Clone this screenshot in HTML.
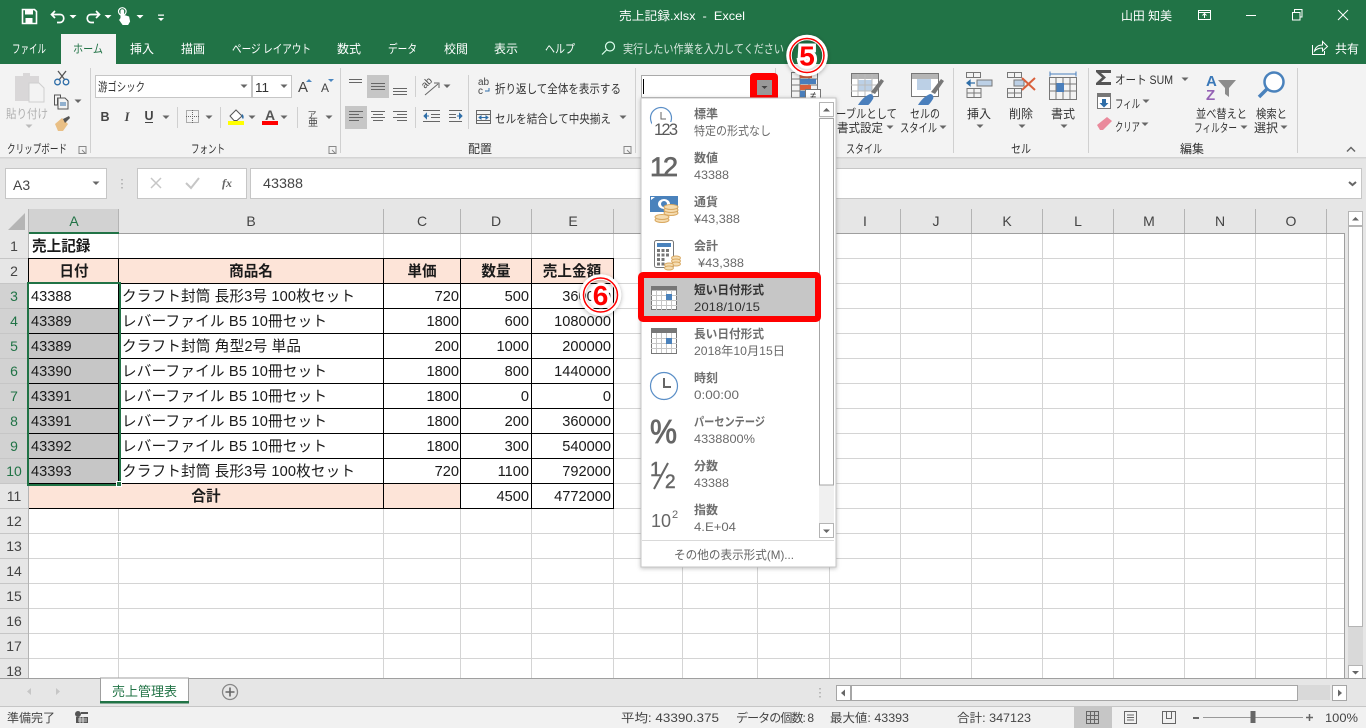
<!DOCTYPE html>
<html lang="ja">
<head>
<meta charset="utf-8">
<title>売上記録.xlsx - Excel</title>
<style>
html,body{margin:0;padding:0;width:1366px;height:728px;overflow:hidden;background:#fff}
svg{display:block}
text{font-family:"Liberation Sans","Noto Sans CJK JP",sans-serif;white-space:pre}
.c{font-size:14.6px;fill:#1a1a1a}
.b{font-weight:bold}
.m{text-anchor:middle}
.e{text-anchor:end}
.u{font-size:12px;fill:#333}
.w{font-size:12px;fill:#fff}
.h{font-size:14px;fill:#444;text-anchor:middle}
.g{fill:#217346}
.l{font-size:12px;fill:#6e6e6e;font-weight:bold}
.s{font-size:12px;fill:#6a6a6a}
.n{font-weight:bold;font-size:28px;fill:#f00;text-anchor:middle;stroke:#fff;stroke-width:6px;paint-order:stroke}
.st{font-size:12px;fill:#444}
</style>
</head>
<body>
<svg width="1366" height="728" viewBox="0 0 1366 728" xmlns="http://www.w3.org/2000/svg">
<defs>
<path id="dd" d="M-3.5-1.5h7L0 2z" fill="#666"/>
<filter id="sh" x="-30%" y="-30%" width="160%" height="160%"><feDropShadow dx="0" dy="1" stdDeviation="2" flood-color="#000" flood-opacity=".3"/></filter>
<filter id="sm" x="-10%" y="-10%" width="120%" height="120%"><feDropShadow dx="0" dy="1" stdDeviation="2" flood-color="#000" flood-opacity=".25"/></filter>
</defs>

<!-- base -->
<rect width="1366" height="728" fill="#e6e6e6"/>
<rect width="1366" height="64" fill="#217346"/>
<rect y="64" width="1366" height="93" fill="#f3f3f3"/>
<rect y="157" width="1366" height="1.5" fill="#d4d4d4"/>

<!-- QAT -->
<g fill="none" stroke="#fff">
<path d="M22.5 9.5h12l2 2v12h-14z" stroke-width="1.6"/>
<rect x="25" y="10" width="8" height="4.5" fill="#fff" stroke="none"/>
<rect x="25.5" y="18" width="7" height="5" fill="#fff" stroke="none"/>
<path d="M55 11l-3.500 3.500L55 18M52 14.500h8c5 0 5 7.500 0 8h-3" stroke-width="1.700"/>
<path d="M96 11l3.500 3.500L96 18M99 14.500h-8c-5 0-5 7.500 0 8h3" stroke-width="1.700"/>
</g>
<path d="M120.500 18v-7a1.800 1.800 0 013.600 0v4l5 1.500 1 5-2 3.500h-5.500l-3.500-5z" fill="#fff"/>
<circle cx="122.300" cy="11.500" r="3.800" fill="none" stroke="#fff" stroke-width="1.200"/>
<path d="M69.500 15h7L73 18.500zM104.500 15h7l-3.500 3.500zM136.500 15h7l-3.500 3.500zM158 18h6l-3 3zM158 14.500h6v1.200h-6z" fill="#fff"/>

<!-- title -->
<text x="619" y="20" class="w" textLength="126" lengthAdjust="spacingAndGlyphs">売上記録.xlsx  -  Excel</text>
<text x="1121" y="20" class="w" textLength="51" lengthAdjust="spacingAndGlyphs">山田 知美</text>
<g fill="none" stroke="#fff" stroke-width="1">
<rect x="1198.500" y="10.500" width="12" height="9"/><path d="M1198.500 12.500h12M1204.500 18v-4M1202.500 15.500l2-2 2 2"/>
<path d="M1246 15.500h10"/>
<path d="M1292.500 12.500h7.500v7.500h-7.500zM1294.500 12v-2.500h7.500v7.500h-2"/>
<path d="M1338 10l10 10M1348 10l-10 10"/>
</g>

<!-- tabs -->
<rect x="61" y="34" width="55" height="30" fill="#f3f3f3"/>
<text x="12" y="53" class="w" textLength="34" lengthAdjust="spacingAndGlyphs">ファイル</text>
<text x="73" y="53" class="u g" textLength="30" lengthAdjust="spacingAndGlyphs">ホーム</text>
<text x="130" y="53" class="w" textLength="24" lengthAdjust="spacingAndGlyphs">挿入</text>
<text x="181" y="53" class="w" textLength="24" lengthAdjust="spacingAndGlyphs">描画</text>
<text x="232" y="53" class="w" textLength="79" lengthAdjust="spacingAndGlyphs">ページ レイアウト</text>
<text x="337" y="53" class="w" textLength="24" lengthAdjust="spacingAndGlyphs">数式</text>
<text x="388" y="53" class="w" textLength="29" lengthAdjust="spacingAndGlyphs">データ</text>
<text x="444" y="53" class="w" textLength="24" lengthAdjust="spacingAndGlyphs">校閲</text>
<text x="494" y="53" class="w" textLength="24" lengthAdjust="spacingAndGlyphs">表示</text>
<text x="545" y="53" class="w" textLength="30" lengthAdjust="spacingAndGlyphs">ヘルプ</text>
<g fill="none" stroke="#dfe" stroke-width="1.200"><circle cx="610" cy="46.500" r="4.500"/><path d="M606.500 50l-4.500 4.500"/></g>
<text x="623" y="53" class="w" style="fill:#d7e6dd" textLength="161" lengthAdjust="spacingAndGlyphs">実行したい作業を入力してください</text>
<g fill="none" stroke="#fff" stroke-width="1"><path d="M1312.500 45v9.500h12V51M1314.500 51c1-4 4-6 8-6v-3.500l5 5-5 4.500v-3c-3 0-6 1-8 3z"/></g>
<text x="1335" y="53" class="w" textLength="24" lengthAdjust="spacingAndGlyphs">共有</text>

<!-- ribbon separators -->
<g fill="#d0d0d0">
<rect x="90" y="68" width="1" height="85"/><rect x="340" y="68" width="1" height="85"/><rect x="635" y="68" width="1" height="85"/><rect x="775" y="68" width="1" height="85"/><rect x="953" y="68" width="1" height="85"/><rect x="1088" y="68" width="1" height="85"/><rect x="1297" y="68" width="1" height="85"/>
<rect x="177" y="107" width="1" height="21"/><rect x="220" y="107" width="1" height="21"/><rect x="297" y="107" width="1" height="21"/>
<rect x="415" y="76" width="1" height="21"/><rect x="415" y="107" width="1" height="21"/><rect x="468" y="75" width="1" height="54"/>
</g>

<!-- clipboard -->
<path d="M15 76h8v-3h7v3h9v25H15z" fill="#d9d7d8"/>
<path d="M29 83h10l5 5v14H29z" fill="#f3f3f3" stroke="#cfcfcf"/>
<text x="6" y="118" class="u" style="fill:#b0b0b0" textLength="42" lengthAdjust="spacingAndGlyphs">貼り付け</text>
<use href="#dd" x="29" y="126" opacity=".4"/>
<g fill="none" stroke="#555" stroke-width="1.300">
<path d="M58 71l7 9M66 71l-7 9" />
<circle cx="57.500" cy="82" r="2.800" stroke="#2f6ea8"/><circle cx="66" cy="82" r="2.800" stroke="#2f6ea8"/>
<path d="M54.500 95h6v3h-3v7h-3zM60 98h5l3 3v8h-10v-11" stroke-width="1"/>
<path d="M60 103h6M60 105h6" stroke="#2f6ea8" stroke-width="1"/>
</g>
<use href="#dd" x="78" y="101"/>
<path d="M55 124l7-6 6 6-5 7h-5z" fill="#e9bf85"/><path d="M63 119l6-3 1 2-5 5z" fill="#555"/>

<!-- font -->
<rect x="95.500" y="75.500" width="156" height="22" fill="#fff" stroke="#c6c6c6"/>
<rect x="252.500" y="75.500" width="39" height="22" fill="#fff" stroke="#c6c6c6"/>
<text x="98" y="91" class="u" textLength="47" lengthAdjust="spacingAndGlyphs">游ゴシック</text>
<text x="255" y="92" class="u" style="font-size:13px" textLength="14" lengthAdjust="spacingAndGlyphs">11</text>
<use href="#dd" x="244" y="86"/><use href="#dd" x="284" y="86"/>
<text x="298" y="92" class="u" style="font-size:15px;fill:#444">A</text>
<path d="M306 82l3-3 3 3z" fill="#4a86c0"/>
<text x="321" y="92" class="u" style="font-size:12px;fill:#444">A</text>
<path d="M328 79h6l-3 3z" fill="#4a86c0"/>
<text x="105" y="121" class="u b m" style="font-size:12.500px;fill:#444">B</text>
<text x="127" y="121" class="u m" style="font-size:12.500px;font-style:italic;font-family:'Liberation Serif',serif;font-weight:bold;fill:#444">I</text>
<text x="149" y="120" class="u b m" style="font-size:12.500px;fill:#444">U</text>
<rect x="145" y="122" width="8" height="1" fill="#444"/>
<use href="#dd" x="166" y="117"/>
<g fill="none" stroke="#666" stroke-width="1" stroke-dasharray="1 1"><rect x="186.500" y="110.500" width="12" height="12"/><path d="M192.500 110v13M186 116.500h13"/></g>
<use href="#dd" x="209" y="117"/>
<path d="M230 116l6-6 6 6-5 4.500h-3z" fill="#fff" stroke="#555"/><path d="M242 114c2 1 2 4 1 5-1-1-2-3-1-5z" fill="#2f6ea8"/>
<rect x="228" y="121" width="16" height="4" fill="#ff0"/>
<use href="#dd" x="252" y="117"/>
<text x="270" y="120" class="u b m" style="font-size:14px;fill:#555">A</text>
<rect x="262" y="121" width="16" height="4" fill="#f00"/>
<use href="#dd" x="284" y="117"/>
<text x="312" y="118" class="u m" style="font-size:9px;fill:#444">ア</text>
<text x="313" y="126" class="u m" style="font-size:10px;fill:#444">亜</text>
<use href="#dd" x="329" y="117"/>
<text x="7" y="153" class="u" textLength="60" lengthAdjust="spacingAndGlyphs">クリップボード</text>
<text x="191" y="153" class="u" textLength="34" lengthAdjust="spacingAndGlyphs">フォント</text>
<g fill="none" stroke="#888" stroke-width="1"><path d="M79 146.500h7v7h-7zM82 150l3 3"/><path d="M329 146.500h7v7h-7zM332 150l3 3"/><path d="M624 146.500h7v7h-7zM627 150l3 3"/></g>

<!-- alignment -->
<rect x="367" y="75" width="22" height="23" fill="#c6c6c6"/>
<rect x="345" y="106" width="22" height="23" fill="#c6c6c6"/>
<g stroke="#666" stroke-width="1" fill="none">
<path d="M349 79.500h13M349 82.500h13"/>
<path d="M371 83.500h14M371 86.500h14M371 89.500h14"/>
<path d="M393 88.500h14M393 91.500h14M393 94.500h14"/>
<path d="M349 111.500h14M349 114.500h10M349 117.500h14M349 120.500h10"/>
<path d="M371 111.500h14M373 114.500h10M371 117.500h14M373 120.500h10"/>
<path d="M393 111.500h14M397 114.500h10M393 117.500h14M397 120.500h10"/>
<path d="M423 110.500h17M431 114.500h9M431 117.500h9M423 121.500h17"/>
<path d="M449 110.500h13M449 114.500h7M449 117.500h7M449 121.500h13"/>
<path d="M425 95l13-11M434 83l5 0v5"/>
</g>
<text x="0" y="0" transform="translate(425 89) rotate(-45)" class="u" style="font-size:10px;fill:#444">ab</text>
<path d="M429 116l-5 0M424 116l2.500-2.500v5z" fill="#2f6ea8" stroke="#2f6ea8"/>
<path d="M457 116h5M462 116l-2.500-2.500v5z" fill="#2f6ea8" stroke="#2f6ea8"/>
<use href="#dd" x="447" y="86"/>
<text x="478" y="85" class="u" style="font-size:10px;fill:#444">ab</text>
<text x="478" y="94" class="u" style="font-size:10px;fill:#444">c</text>
<path d="M485 91h4v-3" fill="none" stroke="#2f6ea8"/>
<text x="495" y="93" class="u" textLength="126" lengthAdjust="spacingAndGlyphs">折り返して全体を表示する</text>
<g fill="none" stroke="#666"><rect x="476.500" y="110.500" width="14" height="13"/><path d="M476.500 114.500h14M476.500 120.500h14"/></g>
<path d="M479 117.500h9M479 117.500l2-1.500v3zM488 117.500l-2-1.500v3z" stroke="#2f6ea8" fill="#2f6ea8"/>
<text x="495" y="123" class="u" textLength="116" lengthAdjust="spacingAndGlyphs">セルを結合して中央揃え</text>
<use href="#dd" x="623" y="117"/>
<text x="468" y="153" class="u" textLength="24" lengthAdjust="spacingAndGlyphs">配置</text>

<!-- conditional formatting icon -->
<g fill="none" stroke="#777"><rect x="791.500" y="72.500" width="26" height="25" /><path d="M791 79h27M791 85h27M791 91h27M800 72v26M809 72v26"/></g>
<rect x="800" y="73" width="12" height="5" fill="#d9603b"/><rect x="800" y="79" width="16" height="5" fill="#4a7fbc"/><rect x="800" y="85" width="11" height="5" fill="#d9603b"/><rect x="800" y="91" width="7" height="6" fill="#4a7fbc"/>
<rect x="805.500" y="89.500" width="15" height="11" fill="#fff" stroke="#777"/>
<text x="813" y="99" class="u m" style="font-size:11px">≠</text>

<!-- table format icon -->
<rect x="851.500" y="73.500" width="27" height="23" fill="#fff" stroke="#777"/>
<rect x="852" y="74" width="26" height="5" fill="#b5b5b5"/>
<rect x="858" y="80" width="14" height="11" fill="#bcd0e6"/>
<g stroke="#bbb" fill="none"><path d="M851 85h27M851 91h27M858 74v22M865 74v22M872 74v22"/></g>
<path d="M871 92l10-13 3 2-9 13z" fill="#777"/>
<path d="M858 105c3-5 7-9 12-11 3 0 4 3 3 5-2 3-4 6-5 6z" fill="#4a7fbc"/>
<text x="836" y="118" class="u" textLength="61" lengthAdjust="spacingAndGlyphs">ーブルとして</text>
<text x="837" y="132" class="u" textLength="46" lengthAdjust="spacingAndGlyphs">書式設定</text>
<use href="#dd" x="890" y="127"/>
<text x="846" y="153" class="u" textLength="36" lengthAdjust="spacingAndGlyphs">スタイル</text>

<!-- cell style icon -->
<rect x="911.500" y="73.500" width="27" height="23" fill="#fff" stroke="#777"/>
<rect x="912" y="74" width="26" height="5" fill="#b5b5b5"/>
<rect x="917" y="79" width="14" height="11" fill="#bcd0e6"/>
<path d="M931 92l10-13 3 2-9 13z" fill="#777"/>
<path d="M918 105c3-5 7-9 12-11 3 0 4 3 3 5-2 3-4 6-5 6z" fill="#4a7fbc"/>
<text x="910" y="118" class="u" textLength="30" lengthAdjust="spacingAndGlyphs">セルの</text>
<text x="900" y="132" class="u" textLength="37" lengthAdjust="spacingAndGlyphs">スタイル</text>
<use href="#dd" x="943" y="127"/>

<!-- insert / delete / format -->
<g fill="none" stroke="#777">
<path d="M966.500 72.500h14v5h-14zM973.500 72.500v5"/>
<path d="M967 88.500h14v9h-14zM967 93h14M974 88.500v9"/>
<path d="M1007.500 72.500h14v5h-14zM1014.500 72.500v5"/>
<path d="M1007.500 88.500h14v9h-14zM1007.500 93h14M1014.500 88.500v9"/>
</g>
<rect x="977" y="80" width="15" height="6" fill="#bcd0e6" stroke="#777"/>
<path d="M967 83h8M967 83l3-2.500v5z" stroke="#2f6ea8" stroke-width="1.300" fill="#2f6ea8"/>
<rect x="1014" y="80" width="10" height="6" fill="#bcd0e6" stroke="#777"/>
<path d="M1022 78l13 12M1035 78l-13 12" stroke="#d9603b" stroke-width="2" fill="none"/>
<g fill="none" stroke="#777"><rect x="1049.500" y="77.500" width="27" height="22"/><path d="M1049 84h28M1049 91h28M1056 78v22M1063 78v22M1070 78v22"/></g>
<rect x="1056.500" y="83" width="7.500" height="9" fill="#4a7fbc"/>
<path d="M1050 74h26M1050 71.500v5M1076 71.500v5" stroke="#4a7fbc" fill="none"/>
<text x="967" y="118" class="u" textLength="24" lengthAdjust="spacingAndGlyphs">挿入</text>
<text x="1009" y="118" class="u" textLength="24" lengthAdjust="spacingAndGlyphs">削除</text>
<text x="1051" y="118" class="u" textLength="24" lengthAdjust="spacingAndGlyphs">書式</text>
<use href="#dd" x="980" y="126"/><use href="#dd" x="1022" y="126"/><use href="#dd" x="1064" y="126"/>
<text x="1011" y="153" class="u" textLength="20" lengthAdjust="spacingAndGlyphs">セル</text>

<!-- editing -->
<path d="M1096 70h15v3h-10l5 4.500-5 4.500h10v3h-15v-2l6-5.500-6-5.500z" fill="#555"/>
<text x="1115" y="84" class="u" textLength="58" lengthAdjust="spacingAndGlyphs">オート SUM</text>
<use href="#dd" x="1185" y="79"/>
<rect x="1097.500" y="93.500" width="13" height="15" fill="#fff" stroke="#777"/><rect x="1097" y="93" width="14" height="4" fill="#777"/>
<path d="M1102 99h4v4h2.500l-4.500 4.500-4.500-4.500h2.500z" fill="#2f6ea8"/>
<text x="1115" y="108" class="u" textLength="25" lengthAdjust="spacingAndGlyphs">フィル</text>
<use href="#dd" x="1146" y="101"/>
<path d="M1097 125l10-8 5 4-9 9h-3z" fill="#ea8a9c"/>
<text x="1115" y="131" class="u" textLength="25" lengthAdjust="spacingAndGlyphs">クリア</text>
<use href="#dd" x="1145" y="124"/>
<text x="1206" y="86" class="b" style="font-size:15px;fill:#3a78b8">A</text>
<text x="1206" y="100" class="b" style="font-size:15px;fill:#9563b5">Z</text>
<path d="M1218 80h18l-7 8v9l-4-3v-6z" fill="#8c8c8c"/>
<circle cx="1274" cy="82" r="9.500" fill="#fff" stroke="#4a82bc" stroke-width="2.500"/>
<path d="M1267 89l-8 8" stroke="#4a82bc" stroke-width="3.500" fill="none"/>
<text x="1196" y="118" class="u" textLength="51" lengthAdjust="spacingAndGlyphs">並べ替えと</text>
<text x="1194" y="132" class="u" textLength="43" lengthAdjust="spacingAndGlyphs">フィルター</text>
<use href="#dd" x="1244" y="127"/>
<text x="1256" y="118" class="u" textLength="31" lengthAdjust="spacingAndGlyphs">検索と</text>
<text x="1254" y="132" class="u" textLength="24" lengthAdjust="spacingAndGlyphs">選択</text>
<use href="#dd" x="1284" y="127"/>
<text x="1180" y="153" class="u" textLength="24" lengthAdjust="spacingAndGlyphs">編集</text>
<path d="M1347 151.500l4-4 4 4" fill="none" stroke="#666" stroke-width="1.500"/>

<!-- formula bar -->
<rect x="5.500" y="168.500" width="101" height="30" fill="#fff" stroke="#c6c6c6"/>
<text x="13" y="190" class="u" style="font-size:14px;fill:#444">A3</text>
<use href="#dd" x="96" y="183"/>
<path d="M122 179v1.500M122 183v1.500M122 187v1.500" stroke="#aaa" stroke-width="1.500"/>
<rect x="137.500" y="168.500" width="109" height="30" fill="#fff" stroke="#c6c6c6"/>
<path d="M151 178l10 10M161 178l-10 10" stroke="#c6c6c6" stroke-width="1.500" fill="none"/>
<path d="M186 183l5 5 8-10" stroke="#c6c6c6" stroke-width="2" fill="none"/>
<text x="222" y="187" style="font-size:12px;font-family:'Liberation Serif',serif;font-style:italic;font-weight:bold;fill:#666">fx</text>
<rect x="250.500" y="168.500" width="1111" height="30" fill="#fff" stroke="#c6c6c6"/>
<text x="263" y="188" class="u" style="font-size:14px;fill:#444" textLength="40" lengthAdjust="spacingAndGlyphs">43388</text>
<path d="M1349 182l3.500 3 3.500-3" fill="none" stroke="#666" stroke-width="2"/>

<!-- sheet -->
<rect x="29" y="234" width="1315" height="445" fill="#fff"/>
<rect x="29" y="209" width="90" height="24" fill="#d2d2d2"/>
<rect y="284" width="28" height="200" fill="#d2d2d2"/>
<path d="M8 230l17-17v17z" fill="#b5b5b5"/>
<g stroke="#b4b4b4" fill="none">
<path d="M118.500 209v24M383.500 209v24M460.500 209v24M531.500 209v24M613.500 209v24M682.500 209v24M757.500 209v24M829.500 209v24M900.500 209v24M971.500 209v24M1042.500 209v24M1113.500 209v24M1184.500 209v24M1255.500 209v24M1326.500 209v24"/>
<path d="M28.500 209v470"/>
</g>
<g stroke="#c6c6c6" fill="none">
<path d="M0 258.500h28M0 283.500h28M0 308.500h28M0 333.500h28M0 358.500h28M0 383.500h28M0 408.500h28M0 433.500h28M0 458.500h28M0 483.500h28M0 508.500h28M0 533.500h28M0 558.500h28M0 583.500h28M0 608.500h28M0 633.500h28M0 658.500h28"/>
</g>
<rect x="29" y="233" width="1316" height="1" fill="#9f9f9f"/>
<rect x="29" y="232" width="90" height="2" fill="#217346"/>

<!-- grid lines -->
<g stroke="#d4d4d4" fill="none">
<path d="M118.500 234v445M383.500 234v445M460.500 234v445M531.500 234v445M613.500 234v445M682.500 234v445M757.500 234v445M829.500 234v445M900.500 234v445M971.500 234v445M1042.500 234v445M1113.500 234v445M1184.500 234v445M1255.500 234v445M1326.500 234v445"/>
<path d="M29 258.500h1315M29 283.500h1315M29 308.500h1315M29 333.500h1315M29 358.500h1315M29 383.500h1315M29 408.500h1315M29 433.500h1315M29 458.500h1315M29 483.500h1315M29 508.500h1315M29 533.500h1315M29 558.500h1315M29 583.500h1315M29 608.500h1315M29 633.500h1315M29 658.500h1315"/>
</g>
<rect x="29" y="259" width="585" height="25" fill="#fde4d8"/>
<rect x="29" y="484" width="432" height="25" fill="#fde4d8"/>
<rect x="29" y="309" width="90" height="175" fill="#c6c6c6"/>
<g stroke="#000" fill="none">
<path d="M29 258.500h585M29 283.500h585M29 308.500h585M29 333.500h585M29 358.500h585M29 383.500h585M29 408.500h585M29 433.500h585M29 458.500h585M29 483.500h585M29 508.500h585"/>
<path d="M28.500 258v26M118.500 258v226M383.500 258v226M460.500 258v251M531.500 258v251M613.500 258v251M383.500 484v25"/>
</g>
<rect x="28" y="283" width="92" height="202" fill="none" stroke="#217346" stroke-width="2"/>
<rect x="116.500" y="481.500" width="5" height="5" fill="#217346" stroke="#fff"/>

<!-- headers -->
<text x="74" y="226" class="h g">A</text>
<text x="251" y="226" class="h">B</text>
<text x="422" y="226" class="h">C</text>
<text x="496" y="226" class="h">D</text>
<text x="573" y="226" class="h">E</text>
<text x="648" y="226" class="h">F</text>
<text x="720" y="226" class="h">G</text>
<text x="794" y="226" class="h">H</text>
<text x="865" y="226" class="h">I</text>
<text x="936" y="226" class="h">J</text>
<text x="1007" y="226" class="h">K</text>
<text x="1078" y="226" class="h">L</text>
<text x="1149" y="226" class="h">M</text>
<text x="1220" y="226" class="h">N</text>
<text x="1291" y="226" class="h">O</text>
<text x="14" y="251" class="h">1</text>
<text x="14" y="276" class="h">2</text>
<text x="14" y="301" class="h g">3</text>
<text x="14" y="326" class="h g">4</text>
<text x="14" y="351" class="h g">5</text>
<text x="14" y="376" class="h g">6</text>
<text x="14" y="401" class="h g">7</text>
<text x="14" y="426" class="h g">8</text>
<text x="14" y="451" class="h g">9</text>
<text x="14" y="476" class="h g">10</text>
<text x="14" y="501" class="h">11</text>
<text x="14" y="526" class="h">12</text>
<text x="14" y="551" class="h">13</text>
<text x="14" y="576" class="h">14</text>
<text x="14" y="601" class="h">15</text>
<text x="14" y="626" class="h">16</text>
<text x="14" y="651" class="h">17</text>
<text x="14" y="676" class="h">18</text>

<!-- cells -->
<text x="32" y="251" class="c b">売上記録</text>
<text x="74" y="276" class="c b m">日付</text>
<text x="251" y="276" class="c b m">商品名</text>
<text x="422" y="276" class="c b m">単価</text>
<text x="496" y="276" class="c b m">数量</text>
<text x="572" y="276" class="c b m">売上金額</text>

<text x="31" y="301" class="c">43388</text>
<text x="122" y="301" class="c" textLength="233">クラフト封筒 長形3号 100枚セット</text>
<text x="459" y="301" class="c e">720</text><text x="529" y="301" class="c e">500</text><text x="611" y="301" class="c e">360000</text>

<text x="31" y="326" class="c">43389</text>
<text x="122" y="326" class="c" textLength="205">レバーファイル B5 10冊セット</text>
<text x="459" y="326" class="c e">1800</text><text x="529" y="326" class="c e">600</text><text x="611" y="326" class="c e">1080000</text>

<text x="31" y="351" class="c">43389</text>
<text x="122" y="351" class="c" textLength="179">クラフト封筒 角型2号 単品</text>
<text x="459" y="351" class="c e">200</text><text x="529" y="351" class="c e">1000</text><text x="611" y="351" class="c e">200000</text>

<text x="31" y="376" class="c">43390</text>
<text x="122" y="376" class="c" textLength="205">レバーファイル B5 10冊セット</text>
<text x="459" y="376" class="c e">1800</text><text x="529" y="376" class="c e">800</text><text x="611" y="376" class="c e">1440000</text>

<text x="31" y="401" class="c">43391</text>
<text x="122" y="401" class="c" textLength="205">レバーファイル B5 10冊セット</text>
<text x="459" y="401" class="c e">1800</text><text x="529" y="401" class="c e">0</text><text x="611" y="401" class="c e">0</text>

<text x="31" y="426" class="c">43391</text>
<text x="122" y="426" class="c" textLength="205">レバーファイル B5 10冊セット</text>
<text x="459" y="426" class="c e">1800</text><text x="529" y="426" class="c e">200</text><text x="611" y="426" class="c e">360000</text>

<text x="31" y="451" class="c">43392</text>
<text x="122" y="451" class="c" textLength="205">レバーファイル B5 10冊セット</text>
<text x="459" y="451" class="c e">1800</text><text x="529" y="451" class="c e">300</text><text x="611" y="451" class="c e">540000</text>

<text x="31" y="476" class="c">43393</text>
<text x="122" y="476" class="c" textLength="233">クラフト封筒 長形3号 100枚セット</text>
<text x="459" y="476" class="c e">720</text><text x="529" y="476" class="c e">1100</text><text x="611" y="476" class="c e">792000</text>

<text x="206" y="501" class="c b m">合計</text>
<text x="529" y="501" class="c e">4500</text><text x="611" y="501" class="c e">4772000</text>

<!-- vertical scrollbar -->
<rect x="1345" y="209" width="21" height="470" fill="#e6e6e6"/>
<rect x="1344" y="234" width="1" height="445" fill="#9f9f9f"/>
<rect x="1348" y="211" width="15" height="468" fill="#d9d9d9"/>
<rect x="1348.500" y="211.500" width="14" height="14" fill="#fff" stroke="#b4b4b4"/>
<path d="M1352 220.500l3.500-3.500 3.500 3.500z" fill="#666"/>
<rect x="1348.500" y="226.500" width="14" height="400" fill="#fff" stroke="#b4b4b4"/>
<rect x="1348.500" y="665.500" width="14" height="14" fill="#fff" stroke="#b4b4b4"/>
<path d="M1352 671h7l-3.500 3.500z" fill="#666"/>

<!-- sheet tabs -->
<rect y="678" width="1366" height="29" fill="#e6e6e6"/>
<rect x="0" y="678" width="1366" height="1" fill="#9f9f9f"/>
<rect x="100.500" y="678" width="88" height="25" fill="#fff" stroke="#9f9f9f"/>
<rect x="100" y="701" width="89" height="2.500" fill="#217346"/>
<text x="112" y="696" class="u g" style="font-size:13px" textLength="65" lengthAdjust="spacingAndGlyphs">売上管理表</text>
<path d="M31 688v7l-4-3.500zM56 688v7l4-3.500z" fill="#c6c6c6"/>
<circle cx="230" cy="692" r="7.500" fill="none" stroke="#888" stroke-width="1.300"/>
<path d="M225.500 692h9M230 687.500v9" stroke="#666" stroke-width="1.600"/>
<path d="M820 688v1.500M820 692v1.500M820 696v1.500" stroke="#aaa" stroke-width="1.500"/>
<rect x="851" y="685" width="479" height="15" fill="#d9d9d9"/>
<rect x="836.500" y="685.500" width="14" height="15" fill="#fff" stroke="#a6a6a6"/>
<path d="M841 693l4-3.500v7z" fill="#666"/>
<rect x="851.500" y="685.500" width="446" height="15" fill="#fff" stroke="#a6a6a6"/>
<rect x="1332.500" y="685.500" width="14" height="15" fill="#fff" stroke="#a6a6a6"/>
<path d="M1342 693l-4-3.500v7z" fill="#666"/>

<!-- status bar -->
<rect y="707" width="1366" height="21" fill="#f1f1f1"/>
<rect y="706" width="1366" height="1" fill="#c6c6c6"/>
<text x="7" y="722" class="st" textLength="48" lengthAdjust="spacingAndGlyphs">準備完了</text>
<g><circle cx="78" cy="714" r="3" fill="#555"/><path d="M81 712h7v2h-7zM76 717h12v6H76z" fill="#555"/><path d="M78 719h9M78 721h9M80 717v6M83 717v6" stroke="#f1f1f1" stroke-width=".8" fill="none"/></g>
<text x="621" y="722" class="st" textLength="98" lengthAdjust="spacingAndGlyphs">平均: 43390.375</text>
<text x="736" y="722" class="st" textLength="78">データの個数: 8</text>
<text x="830" y="722" class="st" textLength="79" lengthAdjust="spacingAndGlyphs">最大値: 43393</text>
<text x="957" y="722" class="st" textLength="74" lengthAdjust="spacingAndGlyphs">合計: 347123</text>
<rect x="1074" y="707" width="38" height="21" fill="#c6c6c6"/>
<g fill="none" stroke="#666">
<rect x="1086.500" y="711.500" width="12" height="12"/><path d="M1090.500 711.500v12M1094.500 711.500v12M1086.500 715.500h12M1086.500 719.500h12"/>
<rect x="1124.500" y="711.500" width="12" height="12"/><path d="M1127 715h7M1127 717.500h7M1127 720h7"/>
<path d="M1162.500 711.500h13v12h-13zM1166.500 711.500v7h5v-7"/>
</g>
<rect x="1193" y="717" width="6" height="2" fill="#666"/>
<rect x="1203" y="717" width="100" height="1" fill="#999"/>
<rect x="1250.500" y="711" width="5" height="12" fill="#666"/>
<path d="M1306 717.500h7M1309.500 714v7" stroke="#666" stroke-width="1.500"/>
<text x="1325" y="722" class="st" textLength="33" lengthAdjust="spacingAndGlyphs">100%</text>

<!-- number format box -->
<rect x="641.500" y="75.500" width="134" height="22" fill="#fff" stroke="#aaa"/>
<rect x="643" y="79" width="1" height="15" fill="#000"/>
<rect x="750" y="73" width="28" height="29" rx="4" fill="#f00"/>
<rect x="757" y="80" width="15" height="15" fill="#999"/>
<path d="M761.500 86h6l-3 3z" fill="#444"/>

<!-- dropdown -->
<rect x="641" y="98" width="195" height="469" fill="#fff" stroke="#c6c6c6" filter="url(#sm)"/>
<rect x="819" y="103" width="15" height="434" fill="#f0f0f0"/>
<rect x="819.500" y="102.500" width="14" height="14" fill="#fff" stroke="#b4b4b4"/>
<path d="M823 111.500l3.500-3.500 3.500 3.500z" fill="#666"/>
<rect x="819.500" y="118.500" width="14" height="366.500" fill="#fff" stroke="#a6a6a6"/>
<rect x="819.500" y="523.500" width="14" height="14" fill="#fff" stroke="#b4b4b4"/>
<path d="M823 529.500h7l-3.500 3.500z" fill="#666"/>
<rect x="642" y="540" width="192" height="1" fill="#d9d9d9"/>
<text x="674" y="559" class="u" style="fill:#666" textLength="120" lengthAdjust="spacingAndGlyphs">その他の表示形式(M)...</text>

<!-- selected item -->
<rect x="641" y="275" width="177" height="44" rx="2" fill="#c6c6c6" stroke="#f00" stroke-width="6"/>

<!-- item icons -->
<circle cx="661" cy="118" r="10.500" fill="none" stroke="#5b8fc7" stroke-width="1.200"/>
<path d="M661 112v7h5" fill="none" stroke="#666" stroke-width="1"/>
<rect x="652" y="122" width="28" height="14" fill="#fff"/>
<text x="654" y="135" style="font-size:16.500px;fill:#595959" textLength="24">123</text>
<text x="650" y="176" style="font-size:27px;fill:#666;stroke:#666;stroke-width:.7px" textLength="28">12</text>
<!-- currency -->
<rect x="650" y="196" width="28" height="16" fill="#4a82bc"/>
<ellipse cx="664" cy="204" rx="6" ry="5" fill="#fff"/><circle cx="664" cy="204" r="3" fill="#4a82bc"/>
<path d="M651 197h4l-4 3zM677 211h-4l4-3z" fill="#fff"/>
<g fill="#f5dcb0" stroke="#d9a860" stroke-width="1"><ellipse cx="671" cy="213" rx="7" ry="2.500"/><ellipse cx="671" cy="210" rx="7" ry="2.500"/><ellipse cx="671" cy="207" rx="7" ry="2.500"/><ellipse cx="662" cy="220" rx="7" ry="2.500"/><ellipse cx="662" cy="217" rx="7" ry="2.500"/></g>
<!-- accounting -->
<rect x="654.500" y="240.500" width="19" height="27" rx="2" fill="#fff" stroke="#777"/>
<rect x="657" y="243" width="14" height="4" fill="#4a82bc"/>
<path d="M657 249h3v3h-3zM661.500 249h3v3h-3zM666 249h3v3h-3zM657 253.500h3v3h-3zM661.500 253.500h3v3h-3zM666 253.500h3v3h-3zM657 258h3v3h-3zM661.500 258h3v3h-3zM657 262.500h3v3h-3zM661.500 262.500h3v3h-3z" fill="#777"/>
<g fill="#f5dcb0" stroke="#d9a860" stroke-width=".9"><ellipse cx="676" cy="258" rx="4.500" ry="2"/><ellipse cx="676" cy="261" rx="4.500" ry="2"/><ellipse cx="676" cy="264" rx="4.500" ry="2"/><ellipse cx="669" cy="265" rx="4.500" ry="2"/><ellipse cx="669" cy="268" rx="4.500" ry="2"/></g>
<!-- short date -->
<rect x="651.500" y="286.500" width="25" height="23" fill="#fff" stroke="#777"/>
<rect x="651" y="286" width="26" height="4.500" fill="#777"/>
<path d="M651 295.500h26M651 300.500h26M651 305.500h26M656.500 290v20M661.500 290v20M666.500 290v20M671.500 290v20" stroke="#c6c6c6" fill="none"/>
<rect x="666" y="294" width="6" height="6" fill="#4a82bc"/>
<!-- long date -->
<rect x="651.500" y="328.500" width="25" height="25" fill="#fff" stroke="#777"/>
<rect x="651" y="328" width="26" height="5" fill="#777"/>
<path d="M651 338.500h26M651 343.500h26M651 348.500h26M656.500 333v20M661.500 333v20M666.500 333v20M671.500 333v20" stroke="#c6c6c6" fill="none"/>
<rect x="666" y="338" width="6" height="6" fill="#4a82bc"/>
<!-- time -->
<circle cx="664" cy="386" r="13.500" fill="#fff" stroke="#5b8fc7" stroke-width="1.200"/>
<path d="M664 378v9h7" fill="none" stroke="#666" stroke-width="2"/>
<!-- percent -->
<text x="650" y="443" style="font-size:33px;fill:#666;stroke:#666;stroke-width:.8px" textLength="27" lengthAdjust="spacingAndGlyphs">%</text>
<!-- fraction -->
<text x="650" y="476" style="font-size:20px;fill:#666;stroke:#666;stroke-width:.5px">1</text>
<path d="M654 489l14-26" stroke="#666" stroke-width="2"/>
<text x="665" y="488" style="font-size:19px;fill:#666;stroke:#666;stroke-width:.5px">2</text>
<!-- exp -->
<text x="651" y="527" style="font-size:18px;fill:#666" textLength="20">10</text>
<text x="672" y="518" style="font-size:11px;fill:#666">2</text>

<!-- item texts -->
<text x="694" y="118" class="l" textLength="24" lengthAdjust="spacingAndGlyphs">標準</text>
<text x="694" y="135" class="s" textLength="77" lengthAdjust="spacingAndGlyphs">特定の形式なし</text>
<text x="694" y="162" class="l" textLength="24" lengthAdjust="spacingAndGlyphs">数値</text>
<text x="694" y="179" class="s" textLength="35" lengthAdjust="spacingAndGlyphs">43388</text>
<text x="694" y="206" class="l" textLength="24" lengthAdjust="spacingAndGlyphs">通貨</text>
<text x="694" y="223" class="s" textLength="46" lengthAdjust="spacingAndGlyphs">¥43,388</text>
<text x="694" y="250" class="l" textLength="24" lengthAdjust="spacingAndGlyphs">会計</text>
<text x="698" y="267" class="s" textLength="46" lengthAdjust="spacingAndGlyphs">¥43,388</text>
<text x="694" y="294" class="l" style="fill:#333" textLength="70" lengthAdjust="spacingAndGlyphs">短い日付形式</text>
<text x="694" y="311" class="s" style="fill:#333" textLength="66" lengthAdjust="spacingAndGlyphs">2018/10/15</text>
<text x="694" y="338" class="l" textLength="70" lengthAdjust="spacingAndGlyphs">長い日付形式</text>
<text x="694" y="355" class="s" textLength="91" lengthAdjust="spacingAndGlyphs">2018年10月15日</text>
<text x="694" y="382" class="l" textLength="24" lengthAdjust="spacingAndGlyphs">時刻</text>
<text x="694" y="399" class="s" textLength="45" lengthAdjust="spacingAndGlyphs">0:00:00</text>
<text x="694" y="426" class="l" textLength="71" lengthAdjust="spacingAndGlyphs">パーセンテージ</text>
<text x="694" y="443" class="s" textLength="61" lengthAdjust="spacingAndGlyphs">4338800%</text>
<text x="694" y="470" class="l" textLength="24" lengthAdjust="spacingAndGlyphs">分数</text>
<text x="694" y="487" class="s" textLength="35" lengthAdjust="spacingAndGlyphs">43388</text>
<text x="694" y="514" class="l" textLength="24" lengthAdjust="spacingAndGlyphs">指数</text>
<text x="694" y="531" class="s" textLength="42" lengthAdjust="spacingAndGlyphs">4.E+04</text>

<!-- callouts -->
<circle cx="807" cy="55.500" r="18" fill="none" stroke="#fff" stroke-width="5.500" filter="url(#sh)"/>
<circle cx="807" cy="55.500" r="17" fill="none" stroke="#f00" stroke-width="1.500"/>
<text x="807" y="65.500" class="n">5</text>
<circle cx="600.500" cy="295" r="18" fill="none" stroke="#fff" stroke-width="5.500" filter="url(#sh)"/>
<circle cx="600.500" cy="295" r="17" fill="none" stroke="#f00" stroke-width="1.500"/>
<text x="600.500" y="305" class="n">6</text>
</svg>
</body>
</html>
